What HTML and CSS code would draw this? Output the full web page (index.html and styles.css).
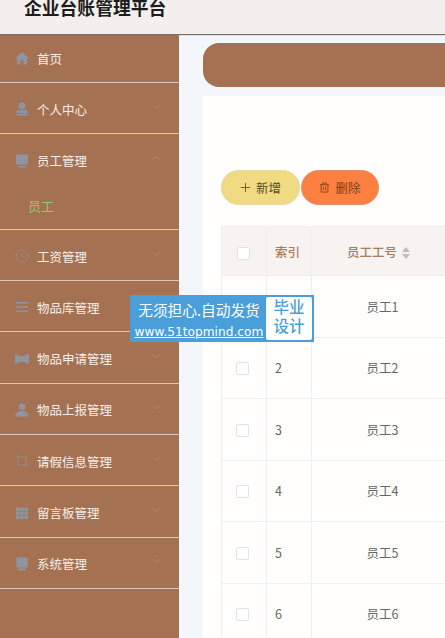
FILE: index.html
```html
<!DOCTYPE html>
<html lang="zh">
<head>
  <meta charset="UTF-8"/>
  <title>企业台账管理平台</title>
  <meta name="viewport" content="width=device-width, initial-scale=1.0"/>
  <link rel="stylesheet" href="styles.css">
</head>
<body>

<div class="header">
  <h1>企业台账管理平台</h1>
</div>

<div class="layout">
  <div class="sidebar">
    <div class="menu-item first">
      <svg class="icon" viewBox="0 0 14 14"><path d="M7 1 0 7.5H2V13.5H5.5V9.5H8.5V13.5H12V7.5H14Z"/></svg>
      <span>首页</span>
    </div>
    <div class="menu-item">
      <svg class="icon" viewBox="0 0 14 14"><circle cx="7" cy="3.8" r="3.4"/><path d="M1.5 8H12.5V11H1.5ZM1.5 11.8H12.5V13.5H1.5Z"/></svg>
      <span>个人中心</span>
      <svg class="arrow" viewBox="0 0 10 6"><path d="M1 1 5 5 9 1"/></svg>
    </div>
    <div class="menu-group">
      <div class="menu-title">
        <svg class="icon" viewBox="0 0 14 14"><path d="M1 0.5H13V10.5H1ZM3 12H11V13.5H3Z"/></svg>
        <span>员工管理</span>
        <svg class="arrow" viewBox="0 0 10 6"><path d="M1 5 5 1 9 5"/></svg>
      </div>
      <div class="sub-item">员工</div>
    </div>
    <div class="menu-item">
      <svg class="icon" viewBox="0 0 14 14"><g class="line-icon"><circle cx="7" cy="7" r="6"/><path d="M7 3.5V7.3H10"/></g></svg>
      <span>工资管理</span>
      <svg class="arrow" viewBox="0 0 10 6"><path d="M1 1 5 5 9 1"/></svg>
    </div>
    <div class="menu-item">
      <svg class="icon" viewBox="0 0 14 14"><path d="M1 2H13V3.4H1ZM1 6.3H13V7.7H1ZM1 10.6H13V12H1Z"/></svg>
      <span>物品库管理</span>
      <svg class="arrow" viewBox="0 0 10 6"><path d="M1 1 5 5 9 1"/></svg>
    </div>
    <div class="menu-item">
      <svg class="icon" viewBox="0 0 14 14"><path d="M0 2.5H3L4 4H10L11 2.5H14V11.5H11L10 10H4L3 11.5H0Z"/></svg>
      <span>物品申请管理</span>
      <svg class="arrow" viewBox="0 0 10 6"><path d="M1 1 5 5 9 1"/></svg>
    </div>
    <div class="menu-item">
      <svg class="icon" viewBox="0 0 14 14"><circle cx="7" cy="3.8" r="3.4"/><path d="M0.5 13.5C0.5 9.5 3.5 8 7 8S13.5 9.5 13.5 13.5Z"/></svg>
      <span>物品上报管理</span>
      <svg class="arrow" viewBox="0 0 10 6"><path d="M1 1 5 5 9 1"/></svg>
    </div>
    <div class="menu-item">
      <svg class="icon" viewBox="0 0 14 14"><g class="line-icon"><path d="M3 0.5V11H13.5M0.5 3H11V13.5"/></g></svg>
      <span>请假信息管理</span>
      <svg class="arrow" viewBox="0 0 10 6"><path d="M1 1 5 5 9 1"/></svg>
    </div>
    <div class="menu-item">
      <svg class="icon" viewBox="0 0 14 14"><path d="M1 1.5H4.6V5H1ZM5.2 1.5H8.8V5H5.2ZM9.4 1.5H13V5H9.4ZM1 5.6H4.6V9H1ZM5.2 5.6H8.8V9H5.2ZM9.4 5.6H13V9H9.4ZM1 9.6H4.6V13H1ZM5.2 9.6H8.8V13H5.2ZM9.4 9.6H13V13H9.4Z"/></svg>
      <span>留言板管理</span>
      <svg class="arrow" viewBox="0 0 10 6"><path d="M1 1 5 5 9 1"/></svg>
    </div>
    <div class="menu-item">
      <svg class="icon" viewBox="0 0 14 14"><path d="M1.5 0.5H12.5V10.5H1.5ZM3 11.5H11V13.5H3Z"/></svg>
      <span>系统管理</span>
      <svg class="arrow" viewBox="0 0 10 6"><path d="M1 1 5 5 9 1"/></svg>
    </div>
  </div>

  <div class="main">
    <div class="main-inner">
      <div class="title-bar"></div>
      <div class="card">
        <div class="buttons">
          <button class="btn btn-add">
            <svg class="btn-icon" viewBox="0 0 12 12"><path d="M6 1V11M1 6H11"/></svg>新增
          </button>
          <button class="btn btn-del">
            <svg class="btn-icon" viewBox="0 0 12 12"><path d="M1 3H11M4 3V1H8V3M2.3 3V11H9.7V3M4.8 5V9M7.2 5V9"/></svg>删除
          </button>
        </div>
        <table class="table">
          <thead>
            <tr>
              <th class="col-check"><span class="checkbox"></span></th>
              <th class="col-index">索引</th>
              <th class="col-no">员工工号<span class="sort"><i class="up"></i><i class="down"></i></span></th>
              <th></th>
            </tr>
          </thead>
          <tbody>
            <tr><td class="col-check"><span class="checkbox"></span></td><td class="col-index"></td><td class="col-no">员工1</td><td></td></tr>
            <tr><td class="col-check"><span class="checkbox"></span></td><td class="col-index">2</td><td class="col-no">员工2</td><td></td></tr>
            <tr><td class="col-check"><span class="checkbox"></span></td><td class="col-index">3</td><td class="col-no">员工3</td><td></td></tr>
            <tr><td class="col-check"><span class="checkbox"></span></td><td class="col-index">4</td><td class="col-no">员工4</td><td></td></tr>
            <tr><td class="col-check"><span class="checkbox"></span></td><td class="col-index">5</td><td class="col-no">员工5</td><td></td></tr>
            <tr><td class="col-check"><span class="checkbox"></span></td><td class="col-index">6</td><td class="col-no">员工6</td><td></td></tr>
          </tbody>
        </table>
      </div>
    </div>
  </div>
</div>

<div class="badge">
  <div class="badge-left">
    <div class="badge-slogan">无须担心.自动发货</div>
    <div class="badge-url">www.51topmind.com</div>
  </div>
  <div class="badge-right">毕业<br>设计</div>
</div>

</body>
</html>
```

FILE: styles.css
```css
:root {
  --marron: #a47252;
  --fondo: #f3f6fa;
  --linea: #eceff3;
}
* {
  margin: 0; padding: 0; box-sizing: border-box;
  font-family: "Noto Sans CJK SC", "Liberation Sans", sans-serif;
}
html, body {
  height: 638px;
  overflow: hidden;
}
body {
  background: var(--fondo);
  position: relative;
}
.header {
  height: 34px;
  background: #f4efec;
  padding-left: 24px;
  box-shadow: 0 1px 1px #6f6f72;
  position: relative;
  z-index: 2;
  overflow: hidden;
}
.header h1 {
  font-size: 17.8px;
  line-height: 15px;
  color: #1c1c1c;
  font-weight: 700;
}
.layout {
  display: flex;
  height: 604px;
}
.sidebar {
  width: 179px;
  flex-shrink: 0;
  background: var(--marron);
}
.menu-item, .menu-title {
  height: 51.3px;
  display: flex;
  align-items: center;
  padding: 2px 0 0 15px;
  color: #f6eee8;
  font-size: 12.5px;
}
.menu-item {
  border-bottom: 1px solid #dcc8ba;
}
.menu-item.first {
  height: 49px;
  padding-top: 0;
}
.menu-group {
  height: 95.6px;
  border-bottom: 1px solid #dcc8ba;
}
.icon {
  width: 14px;
  height: 14px;
  margin-right: 8px;
  fill: #90949e;
  flex-shrink: 0;
}
.line-icon {
  fill: none;
  stroke: #968a84;
  stroke-width: 1;
}
.arrow {
  width: 9px;
  height: 6px;
  margin: -5px 18px 0 auto;
  fill: none;
  stroke: #b48a6f;
  stroke-width: 1;
}
.sub-item {
  padding-left: 28px;
  font-size: 13px;
  line-height: 40px;
  color: #8fcb68;
}
.main {
  flex: 1;
  min-width: 0;
  overflow: hidden;
}
.main-inner {
  width: 900px;
  padding: 9px 0 0 24px;
}
.title-bar {
  height: 44px;
  background: var(--marron);
  border-radius: 16px;
}
.card {
  background: #fffefd;
  margin-top: 9px;
  padding: 74px 0 0 18px;
  height: 560px;
}
.buttons {
  display: flex;
  gap: 1px;
  height: 35px;
}
.btn {
  width: 79px;
  height: 35px;
  border-radius: 18px;
  border: 1px solid #e6d9a0;
  font-size: 12.5px;
  display: flex;
  align-items: center;
  justify-content: center;
  gap: 5px;
}
.btn-add {
  background: #f0db82;
  color: #5a4a28;
}
.btn-del {
  width: 78px;
  background: #fe8040;
  border-color: #e09070;
  color: #7d3d1c;
}
.btn-icon {
  width: 11px;
  height: 11px;
  fill: none;
  stroke: currentColor;
  stroke-width: 0.9;
}
.table {
  margin-top: 21px;
  border-collapse: collapse;
  table-layout: fixed;
  width: 660px;
  font-size: 12.5px;
}
.table th, .table td {
  border: 1px solid var(--linea);
}
.table th {
  height: 49px;
  background: #f7f3f0;
  color: #a67c62;
  font-weight: 500;
}
.table td {
  height: 61.5px;
  background: #fffefd;
  color: #666;
  text-align: center;
}
.table th.col-check {
  padding-right: 1px;
}
.table td.col-check {
  padding: 0 4px 2px 0;
}
.col-check {
  width: 45px;
  text-align: center;
}
.table .col-index {
  width: 45px;
  text-align: left;
  padding-left: 8px;
}
.col-no {
  width: 142px;
}
.table th.col-no {
  padding-right: 8px;
}
.checkbox {
  display: inline-block;
  width: 13px;
  height: 13px;
  background: #fff;
  border: 1px solid #e1e3e8;
  border-radius: 2px;
  vertical-align: middle;
}
.sort {
  display: inline-block;
  width: 8px;
  height: 12px;
  margin-left: 5px;
  vertical-align: middle;
}
.sort i {
  display: block;
  width: 0;
  height: 0;
  border-left: 4px solid transparent;
  border-right: 4px solid transparent;
}
.sort .up {
  border-bottom: 5px solid #b8bcc4;
  margin-bottom: 2px;
}
.sort .down {
  border-top: 5px solid #b8bcc4;
}
.badge {
  position: absolute;
  left: 130px;
  top: 295px;
  width: 184px;
  height: 47px;
  background: #4a9ed9;
  display: flex;
  z-index: 3;
}
.badge-left {
  width: 136px;
  color: #fff;
  text-align: center;
  padding-left: 2px;
}
.badge-slogan {
  font-size: 14.7px;
  line-height: 18px;
  margin-top: 6px;
}
.badge-url {
  font-size: 12.2px;
  line-height: 16px;
  margin-top: 5px;
  font-family: "DejaVu Sans", sans-serif;
  text-decoration: underline;
  white-space: nowrap;
}
.badge-right {
  width: 46px;
  height: 43px;
  margin-top: 2px;
  background: #fff;
  border-radius: 2px;
  color: #4a9ed9;
  font-size: 15.5px;
  line-height: 19px;
  font-weight: 500;
  text-align: center;
}
```
